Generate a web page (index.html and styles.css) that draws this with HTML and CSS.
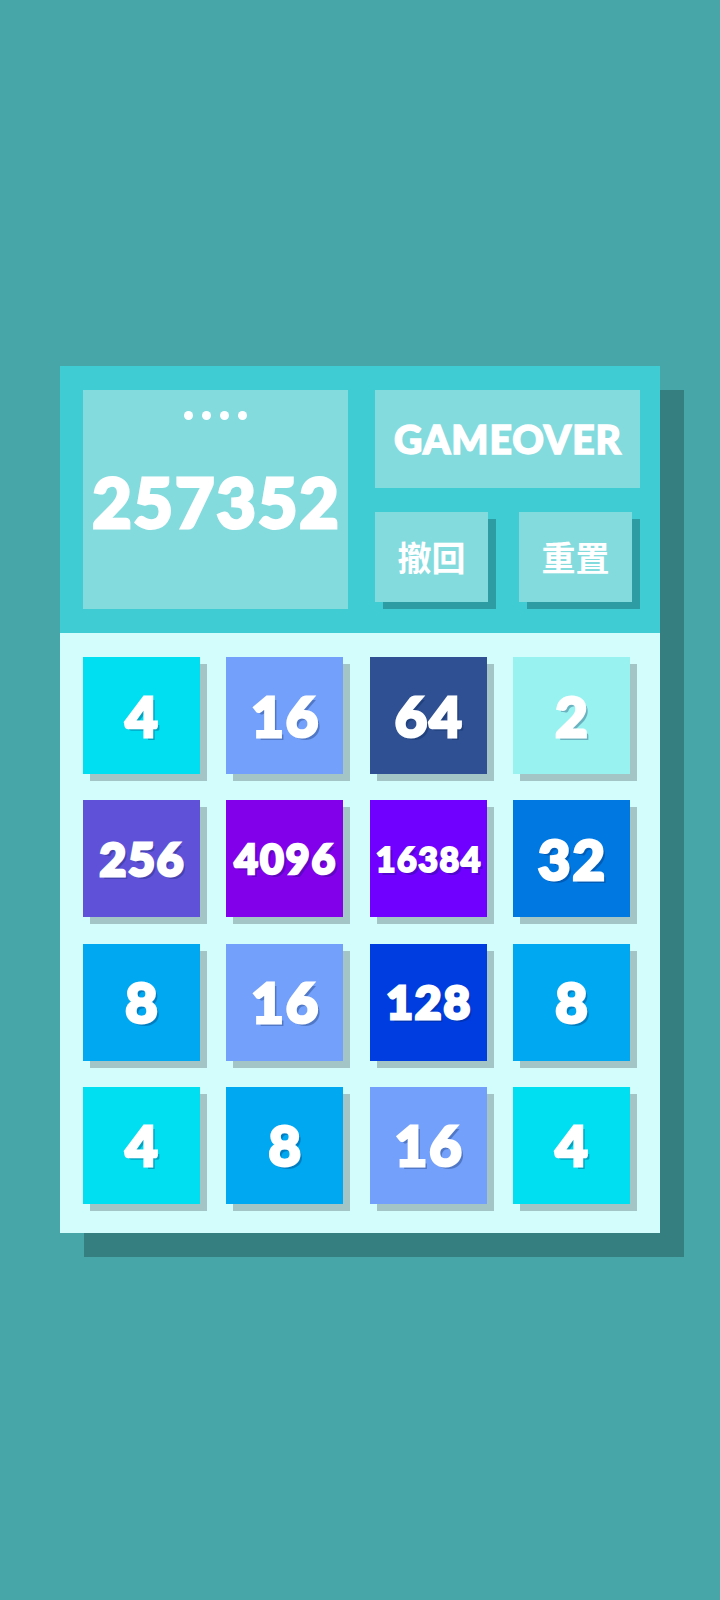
FILE: index.html
```html
<!DOCTYPE html>
<html lang="zh">
<head>
<meta charset="utf-8">
<title>2048</title>
<link rel="stylesheet" href="styles.css">
</head>
<body>
<div class="game">
  <div class="header">
    <div class="score-box">
      <div class="dots"><span></span><span></span><span></span><span></span></div>
      <div class="score">257352</div>
    </div>
    <div class="side">
      <div class="status">GAMEOVER</div>
      <div class="buttons">
        <div class="btn">撤回</div>
        <div class="btn">重置</div>
      </div>
    </div>
  </div>
  <div class="board">
    <div class="tile t4">4</div>
    <div class="tile t16">16</div>
    <div class="tile t64">64</div>
    <div class="tile t2">2</div>
    <div class="tile t256 d3">256</div>
    <div class="tile t4096 d4">4096</div>
    <div class="tile t16384 d5">16384</div>
    <div class="tile t32">32</div>
    <div class="tile t8">8</div>
    <div class="tile t16">16</div>
    <div class="tile t128 d3">128</div>
    <div class="tile t8">8</div>
    <div class="tile t4">4</div>
    <div class="tile t8">8</div>
    <div class="tile t16">16</div>
    <div class="tile t4">4</div>
  </div>
</div>
</body>
</html>
```
FILE: styles.css
```css
html, body {
  margin: 0;
  padding: 0;
}
body {
  background: #47a7a8;
  min-height: 1600px;
  display: flex;
  align-items: center;
  justify-content: center;
  font-family: Lato, "Noto Sans", sans-serif;
}
.game {
  width: 600px;
  box-shadow: 24px 24px 0 #367f80;
  margin-top: -1px;
}
.header {
  background: #40ccd3;
  display: flex;
  gap: 27px;
  padding: 24px 20px 24px 23px;
}
.score-box {
  width: 265px;
  height: 219px;
  background: #84dbde;
  display: flex;
  flex-direction: column;
  align-items: center;
  padding-top: 21px;
  box-sizing: border-box;
}
.dots {
  display: flex;
  gap: 9px;
}
.dots span {
  width: 9px;
  height: 9px;
  border-radius: 50%;
  background: #ffffff;
}
.score {
  margin-top: 48px;
  padding-left: 2px;
  font-size: 68px;
  line-height: 1;
  font-weight: 900;
  color: #ffffff;
  letter-spacing: 2px;
  -webkit-text-stroke: 3px #ffffff;
}
.side {
  width: 265px;
  display: flex;
  flex-direction: column;
  gap: 24px;
}
.status {
  height: 98px;
  background: #84dbde;
  color: #ffffff;
  font-size: 39px;
  font-weight: 900;
  display: flex;
  align-items: center;
  justify-content: center;
  line-height: 1;
  letter-spacing: 1px;
  padding-left: 1px;
  -webkit-text-stroke: 1.5px #ffffff;
}
.buttons {
  display: flex;
  justify-content: space-between;
  padding-right: 8px;
}
.btn {
  width: 113px;
  height: 90px;
  background: #84dbde;
  box-shadow: 8px 7px 0 #2e9da3;
  color: #ffffff;
  font-family: "Noto Sans CJK SC", "Noto Sans", sans-serif;
  font-weight: 700;
  font-size: 34px;
  display: flex;
  align-items: center;
  justify-content: center;
  line-height: 1;
}
.board {
  background: #d3fcfc;
  height: 600px;
  box-sizing: border-box;
  padding: 24px 23px;
  display: grid;
  grid-template-columns: repeat(4, 117px);
  grid-template-rows: repeat(4, 117px);
  gap: 26.33px;
}
.tile {
  width: 117px;
  height: 117px;
  box-sizing: border-box;
  padding-left: 2px;
  box-shadow: 7px 7px 0 #a3c5c6;
  color: #ffffff;
  font-weight: 900;
  font-size: 56px;
  line-height: 1;
  letter-spacing: 2px;
  display: flex;
  align-items: center;
  justify-content: center;
  -webkit-text-stroke: 3px #ffffff;
  text-shadow: 3px 3px 0 rgba(0, 30, 80, 0.3);
}
.d3 { font-size: 46px; }
.d4 { font-size: 41px; -webkit-text-stroke: 2.5px #ffffff; }
.d5 { font-size: 34px; letter-spacing: 1.5px; padding-left: 1.5px; -webkit-text-stroke: 2px #ffffff; }
.t2 { background: #98f2f0; }
.t4 { background: #00def2; }
.t8 { background: #00a8f2; }
.t16 { background: #73a0fa; }
.t32 { background: #0078e2; }
.t64 { background: #2f5193; }
.t128 { background: #003de0; }
.t256 { background: #6052d8; }
.t4096 { background: #8200ea; }
.t16384 { background: #7000ff; }
```
